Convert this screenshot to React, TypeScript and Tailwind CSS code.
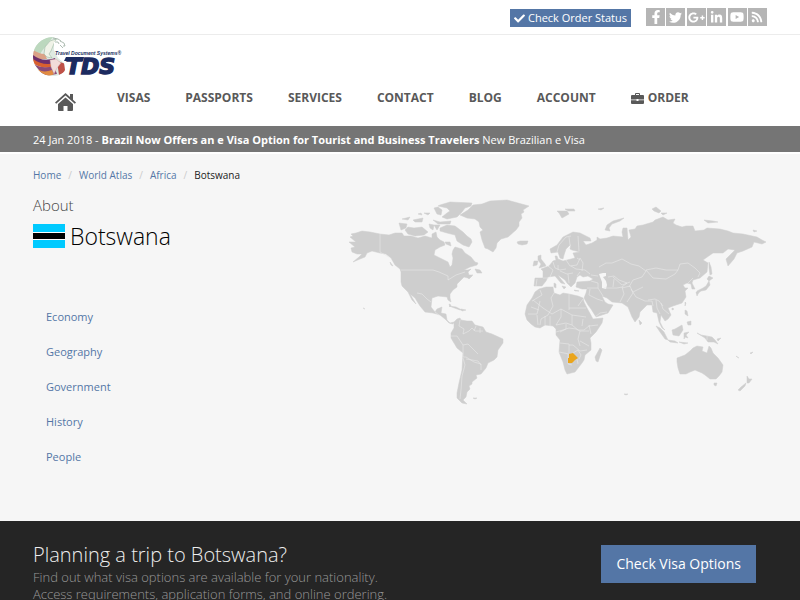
import React from "react";
import {
  FaCheck,
  FaFacebookF,
  FaTwitter,
  FaGooglePlusG,
  FaLinkedinIn,
  FaYoutube,
  FaRss,
} from "react-icons/fa";

const social = [
  { label: "Facebook", Icon: FaFacebookF, size: 14 },
  { label: "Twitter", Icon: FaTwitter, size: 13 },
  { label: "Google Plus", Icon: FaGooglePlusG, size: 17 },
  { label: "LinkedIn", Icon: FaLinkedinIn, size: 13 },
  { label: "YouTube", Icon: FaYoutube, size: 14 },
  { label: "RSS", Icon: FaRss, size: 12 },
];

const navItems = ["Visas", "Passports", "Services", "Contact", "Blog", "Account"];
const sections = ["Economy", "Geography", "Government", "History", "People"];

// Land masses, in the map's own coordinate space.
const land = [
  // North and Central America
  "M350 237L353 236 351 234 356 233 362 231 370 232 380 234 389 235 395 233 402 233 404 236 411 236 418 238 425 236 432 238 432 234 436 232 437 237 440 240 444 242 445 245 440 247 435 250 434 255 440 258 448 262 450 267 452 265 453 258 452 254 453 250 455 247 462 249 465 253 468 255 471 257 475 262 478 263 477 265 470 267 464 270 468 270 471 269 468 272 469 275 473 275 468 278 464 277 457 284 457 287 453 290 450 294 450 298 451 302 448 300 447 297 438 296 432 298 431 307 435 312 437 309 442 307 441 313 446 314 447 320 450 323 454 322 453 324 449 323 445 319 440 315 433 313 425 312 420 306 415 298 410 294 416 304 412 300 408 292 402 286 401 282 401 272 400 269 395 265 391 258 386 254 380 253 372 251 367 253 365 257 360 259 353 262 359 257 362 254 357 254 352 252 351 248 355 247 349 242 356 242Z",
  // Greenland
  "M460 215L468 210 473 205 482 204 490 201 507 200 518 203 529 206 523 210 524 212 521 214 522 218 519 222 519 226 516 230 508 237 501 239 497 243 496 248 493 252 488 249 485 248 482 240 480 232 483 230 480 227 479 222 475 219 467 218Z",
  // Arctic archipelago
  "M440 205L450 202 472 203 471 206 465 208 462 212 457 217 447 219 442 217 447 213 450 211 447 208 438 206ZM434 208L438 207 442 210 441 215 437 214ZM433 220L440 222 451 221 450 224 438 224ZM440 228L447 225 455 226 463 232 467 236 471 239 472 242 469 247 463 245 457 241 455 235 447 233 440 231Z",
  "M399 223L407 224 406 228 401 230ZM405 230L408 227 414 228 422 227 428 232 424 235 415 236 408 234ZM402 219L410 217 408 220ZM413 220L423 218 422 222 415 222ZM424 213L430 213 428 215ZM429 224L434 225 433 230 430 228ZM418 214L421 213 422 215ZM434 225L440 225 437 230ZM445 242L450 242 451 246 446 244ZM475 269L480 270 482 273 477 273ZM467 277L472 276 469 279Z",
  // Caribbean
  "M449 306L456 307 462 310 460 310ZM461 309L466 310 462 311ZM390 262L393 266 391 265ZM449 304L451 305 450 307Z",
  // South America
  "M454 322L457 319 460 318 461 320 467 321 472 321 475 325 483 327 486 332 492 334 503 339 503 343 498 350 497 357 494 360 488 363 486 368 481 374 476 375 477 378 472 382 472 384 469 386 470 389 467 392 466 397 463 400 467 404 462 403 457 398 457 393 459 383 462 370 463 353 457 348 451 338 451 333 454 328Z",
  "M473 398L477 398 475 399Z",
  // Africa
  "M535 292L539 289 546 287 553 287 554 293 560 295 563 293 569 294 578 296 583 298 584 302 587 308 593 319 603 318 602 323 596 332 590 338 591 343 591 350 585 355 584 360 582 363 575 372 567 374 565 370 563 362 559 352 560 340 556 335 556 329 553 326 545 325 540 328 535 327 531 324 527 320 525 314 527 305 532 298Z",
  "M600 348L602 350 598 362 596 361 595 357Z",
  // Europe and Asia
  "M551 253L550 249 557 245 563 237 573 232 580 233 590 238 591 241 583 241 586 245 592 243 597 240 597 237 600 239 607 238 613 236 623 237 622 232 623 228 627 228 628 240 631 237 629 230 635 229 637 226 643 225 653 222 655 220 663 217 668 220 675 219 673 223 676 225 682 227 686 226 693 226 695 231 704 230 707 228 720 229 728 231 733 233 743 234 757 237 762 240 766 242 762 244 754 242 752 247 743 251 737 253 734 259 728 266 726 259 735 250 728 249 723 253 713 253 703 260 708 263 707 272 700 278 693 280 692 283 695 289 692 289 691 284 687 283 683 285 685 288 688 288 685 291 686 297 682 303 673 306 668 308 671 315 668 319 665 321 661 315 660 322 663 328 665 330 662 328 659 322 657 313 653 312 652 305 647 305 640 312 639 317 635 322 632 317 628 307 622 303 612 302 607 298 602 296 605 302 608 304 613 305 608 313 596 317 591 309 588 305 584 298 586 293 587 289 582 289 576 287 577 282 590 281 593 279 588 276 583 277 580 275 577 277 575 283 571 287 567 283 565 280 558 275 560 278 565 284 561 283 555 276 548 277 546 281 542 286 534 286 535 278 543 278 543 271 541 269 549 266 553 261 556 260 555 256 557 256 558 259 563 261 575 258 573 253 580 252 572 250 570 249 571 244 566 249 564 255 563 259 560 258 558 252Z",
  // British Isles, Iceland and northern islands
  "M538 256L541 255 541 259 545 264 546 266 539 268 541 264 538 260ZM534 261L538 261 537 265 533 266ZM517 242L520 241 528 241 527 244 522 245 518 244ZM557 211L567 211 569 214 562 218 559 213ZM565 209L574 209 575 211 568 211ZM598 209L604 208 601 210ZM605 230L607 225 613 221 624 218 620 221 612 224 609 228 610 231ZM652 209L656 207 661 211 659 213 654 211ZM661 213L667 213 663 215ZM704 220L713 221 718 222 708 223ZM753 230L757 231 754 232ZM554 283L556 284 556 288 554 287ZM562 286L566 287 564 289ZM574 290L579 291 575 291Z",
  // Japan, Sakhalin, Taiwan
  "M709 262L711 267 712 274 710 275 709 268ZM709 276L713 278 709 281 707 279ZM709 281L710 285 706 290 701 291 697 294 697 291 703 288 706 286ZM696 292L699 292 697 296ZM685 302L686 303 685 306ZM672 308L674 309 672 310ZM639 320L642 323 640 325Z",
  // Southeast Asia
  "M656 326L660 328 664 332 668 340 665 339 660 332ZM668 340L675 341 678 343 670 342ZM672 330L675 329 682 325 683 330 679 336 673 335ZM684 333L689 332 686 335 688 338 685 337 684 339ZM685 310L687 311 688 316 685 314ZM687 322L691 321 691 325 688 325ZM679 342L688 343 684 344ZM697 333L701 335 712 337 715 340 718 344 714 342 708 342 705 338ZM717 339L721 338 718 341Z",
  // Australia and New Zealand
  "M677 358L685 355 690 351 693 348 697 346 703 347 702 351 707 353 709 346 711 348 713 353 718 358 723 365 722 372 719 376 716 379 710 379 705 375 702 373 695 370 690 372 686 374 680 374 678 368 677 362Z",
  "M714 383L717 383 716 386 714 385ZM747 376L749 379 752 379 749 383 747 383ZM746 383L745 386 740 391 738 390 741 387ZM736 356L739 358 737 357ZM750 353L753 352 751 354ZM624 394L628 394 626 395ZM363 308L365 309Z",
];

const borders =
  "M380 234l0 18 9 5M401 270l32 0 6 2 9 4 0 4 8-5 9-3M417 293l5 1 5 5 4 3M435 312l4 3M460 320l-1 6 5 3-1 5 6-3 3-3 3 3 8 0M451 336l6 0 6 9 0 12 3 0 8 5 7 2 0 6M463 345l5-1 6 6 4 4M463 358l2 7-3 11-1 14-1 9M466 359l6 1 6 1 3 4M476 326l-2 5M480 328l0 5" +
  "M540 290l2 5-10 6M533 300l10 8 9 6 9-5 11 6 0 10 6 5 6 0 5-4 9-1M554 293l-3 5 2 8M569 294l0 16M569 308l17 0M553 306l-5 9-7 4-1 6M528 314l9 0 3-13M561 309l0 8-5 8M556 325l10-2 6 2M572 315l14 2M566 324l0 5-6 3M556 332l7-2 6-2 7 1 4 2-2 8 2 7M580 331l9 0M589 325l2 9M580 341l9 5M560 343l9 1 0 9M569 345l4 0 7 6 7-1M559 352l10 2M568 354l0 10 4 1M573 353l5-3 3 5-2 4M577 359l1 5M531 307l8 3M537 315l1 10M545 316l0 9M550 316l0 10M583 299l-5 7M583 319l-1 7" +
  "M557 252l2-7 7-8 5-1M570 245l-1-8M579 251l-1-15M566 260l4 6 7-1 3-7 3 5-1 8M553 262l2 6 5 2 6-1M548 266l5 4-3 7M560 271l7 3 6-1M571 266l5 3 9 1 5 4M568 274l1 9M577 258l3 2M558 265l0 5M580 272l-3 4M543 278l6 0M537 279l-1 7M591 281l7 2 0 5-11 0M591 275l7 1M598 288l5 8M590 289l-1 6 8 4 6 2M595 317l5-4 7-1M604 288l13 0 5-1 2 7-4 8M599 267l7-4 6 0 10-4 9 5 8 2 7 5-4 6-9 3-4 7M608 277l6-1 5 4 8 3-5 4M613 277l9 8 8-3M622 288l8-2 3 7-6 9M631 289l5 8 9 4 7 0 1 5M633 292l10-5M646 270l10-2 10 2 12 0-3 4-9 5-13-1-7-8M678 270l2-6 8-1 7 5 5 5-2 4M688 283l5-5M648 300l7-1 4 2 4 5M656 300l1 8 3 6M661 303l2 6 6 5M614 279l-1 8M707 335l0 5";

function WorldMap() {
  return (
    <svg viewBox="340 190 440 220" className="block w-full" role="img" aria-label="World map with Botswana highlighted">
      <g fill="#cecece" stroke="#cecece" strokeWidth="0.5" strokeLinejoin="round">
        {land.map((d) => (
          <path key={d} d={d} />
        ))}
      </g>
      <path d="M599 274l4-1 3 0 0 3-3 1 3 4 1 4-1 4-4-1 0-6z" fill="#f6f6f6" />
      <path d={borders} fill="none" stroke="#e9e9e9" strokeWidth="0.6" strokeLinejoin="round" />
      <path d="M569 354l4-1 2 2 3 3-3 2-3 3-4 0 0-5 1 0z" fill="#eaa51c" />
    </svg>
  );
}

function Logo() {
  return (
    <svg viewBox="0 0 88 40" className="block h-10 w-22 overflow-visible" role="img" aria-label="Travel Document Systems">
      <defs>
        <clipPath id="globe">
          <path d="M20 0A19.500 19.500 0 0 0 0 20A19.500 19.500 0 0 0 20 39c5 0 10-2 12-6l-1-7-6-5-4-8 0-8 4-3z" />
        </clipPath>
      </defs>
      <g clipPath="url(#globe)">
        <rect width="40" height="40" fill="#dfeae2" />
        <path d="M0 14C4 4 12 0 20 0l-5 6-6 8-3 5z" fill="#bcd8be" />
        <path d="M0 13c4 2 7 4 12 4l2 5-14 0z" fill="#dba287" />
        <path d="M0 18c6 5 14 6 22 3l1 5C12 31 4 27 0 23z" fill="#6d2f6c" />
        <path d="M0 22c7 5 14 6 22 4l0 4C10 32 4 29 0 26z" fill="#d9602f" />
        <path d="M1 27c6 4 12 4 20 2l3 8-13 2z" fill="#8a4a78" />
        <path d="M4 32c5 3 9 3 15 1l2 4c-5 3-10 1-14-1z" fill="#e18b42" />
        <path d="M24 24l9 3-1 8-6 3z" fill="#bf5148" />
        <path d="M11 17l1-7 5-6 6-2-3 7-2 5-2 3 3 4-5-1z" fill="#f0f3e8" stroke="#8fae97" strokeWidth="0.5" />
        <path d="M17 23l6-1 5 4-4 5-3 6-3-7z" fill="#f1dcd9" stroke="#c99aa0" strokeWidth="0.4" />
      </g>
      <path d="M20 1l5 1 3 2M22 5l3 0 1 2M27 4l4 2 1 3-2 0M27 8l3 3" fill="none" stroke="#9aaca0" strokeWidth="0.8" />
      <text x="22" y="18" fontFamily="Liberation Sans" fontSize="5" fontWeight="bold" fontStyle="italic" fill="#24325f">
        Travel Document Systems®
      </text>
      <text x="33" y="37" fontFamily="DejaVu Sans" fontSize="22" fontWeight="bold" fontStyle="italic" fill="#1c2b60" stroke="#1c2b60" strokeWidth="1.5">
        TDS
      </text>
      <path d="M33 20h18l-1 4H31z" fill="#1c2b60" />
    </svg>
  );
}

function HomeIcon() {
  return (
    <svg viewBox="0 0 21 18" className="block h-[18px] w-[21px]" fill="currentColor" aria-hidden="true">
      <path d="M10.500 0L0 9.500l1.200 1.200 9.300-8.200 9.300 8.200L21 9.500l-3-2.800V1h-3v3z" />
      <path d="M10.500 4.500L3 11v6q0 1 1 1h4.500v-5h4v5H17q1 0 1-1v-6z" />
    </svg>
  );
}

function BriefcaseIcon() {
  return (
    <svg viewBox="0 0 13 11" className="block h-[11px] w-[13px]" fill="currentColor" aria-hidden="true">
      <path fillRule="evenodd" d="M4 2V1q0-1 1-1h3q1 0 1 1v1h3q1 0 1 1v3.500H7.500V6h-2v.5H0V3q0-1 1-1zM5 1v1h3V1z" />
      <path d="M0 7.200h5.500v.8h2v-.8H13V10q0 1-1 1H1q-1 0-1-1z" />
    </svg>
  );
}

function Flag() {
  return (
    <svg viewBox="0 0 32 24" className="block h-6 w-8" role="img" aria-label="Flag of Botswana">
      <rect width="32" height="24" fill="#00caff" />
      <rect y="8" width="32" height="8" fill="#fff" />
      <rect y="9" width="32" height="6" fill="#000" />
    </svg>
  );
}

export default function App() {
  return (
    <div className="bg-[#f6f6f6] font-['Open_Sans',sans-serif] text-[#222]">
      <header className="bg-white">
        <div className="flex items-start justify-end gap-[15px] border-b border-[#ececec] px-[33px] pt-2 pb-[7px]">
          <button className="mt-px flex h-[18px] items-center gap-[3px] bg-[#5476a6] px-1 text-[11px] text-white">
            <FaCheck size={11} />
            Check Order Status
          </button>
          <nav aria-label="Social media" className="flex w-[121px] justify-between">
            {social.map(({ label, Icon, size }) => (
              <a key={label} href="#" aria-label={label} className="flex h-[18px] w-[19px] items-center justify-center bg-[#b5b5b5] text-white">
                <Icon size={size} />
              </a>
            ))}
          </nav>
        </div>
        <div className="px-[33px] pt-[2px] pb-[15px]">
          <a href="#" className="inline-block align-top">
            <Logo />
          </a>
          <nav aria-label="Main" className="mt-3 flex items-start pl-[22px] text-xs leading-[18px] font-bold text-[#595959] uppercase">
            <a href="#" aria-label="Home" className="mt-1 mr-[41px]">
              <HomeIcon />
            </a>
            <div className="flex gap-[35px]">
              {navItems.map((item) => (
                <a key={item} href="#">
                  {item}
                </a>
              ))}
              <a href="#" className="flex items-center gap-1">
                <BriefcaseIcon />
                Order
              </a>
            </div>
          </nav>
        </div>
      </header>

      <div className="border-b-2 border-white bg-[#757575] px-[33px] pt-[5px] pb-[3px] text-[11px] leading-[18px] text-white">
        24 Jan 2018 - <a href="#" className="font-bold">Brazil Now Offers an e Visa Option for Tourist and Business Travelers</a> New Brazilian e Visa
      </div>

      <main className="px-[33px] pt-[11px] pb-[47px]">
        <nav aria-label="Breadcrumb" className="text-[10px] leading-5">
          <ol className="flex gap-[7px]">
            {["Home", "World Atlas", "Africa"].map((crumb) => (
              <li key={crumb} className="flex gap-[7px]">
                <a href="#" className="text-[#5476a6]">
                  {crumb}
                </a>
                <span className="text-[#ccc]">/</span>
              </li>
            ))}
            <li>Botswana</li>
          </ol>
        </nav>
        <div className="flex">
          <div className="w-[307px] shrink-0">
            <h1 className="pt-2">
              <span className="block text-[15px] leading-6 font-light text-[#444]">About</span>
              <span className="mt-[3px] flex items-center gap-[5px] text-[23px] leading-8 font-light text-black">
                <Flag />
                Botswana
              </span>
            </h1>
            <ul className="mt-[47px] pl-[13px] text-[11px]">
              {sections.map((name) => (
                <li key={name} className="py-2 leading-[19px]">
                  <a href="#" className="text-[#5476a6]">
                    {name}
                  </a>
                </li>
              ))}
            </ul>
          </div>
          <div className="-mr-[13px] grow pt-[5px]">
            <WorldMap />
          </div>
        </div>
      </main>

      <section className="flex items-start justify-between bg-[#252525] px-[33px] pt-5 pb-6">
        <div>
          <h2 className="text-xl leading-7 font-light text-[#eee]">Planning a trip to Botswana?</h2>
          <p className="text-[13px] leading-[17px] font-light text-[#999]">
            Find out what visa options are available for your nationality.
            <br />
            Access requirements, application forms, and online ordering.
          </p>
        </div>
        <button className="mt-1 mr-[11px] h-[38px] bg-[#5476a6] px-[15px] text-sm text-white">Check Visa Options</button>
      </section>
    </div>
  );
}
